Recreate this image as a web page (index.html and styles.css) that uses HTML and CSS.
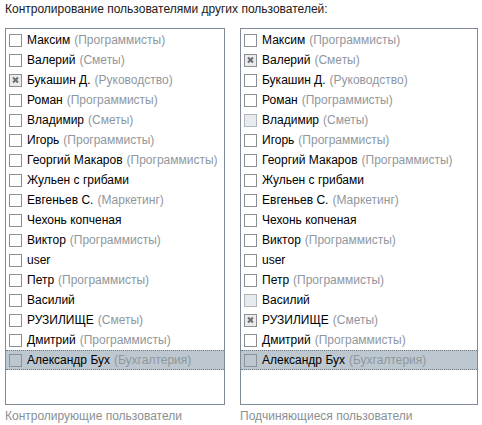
FILE: index.html
```html
<!DOCTYPE html>
<html>
<head>
<meta charset="utf-8">
<link rel="stylesheet" href="styles.css">
</head>
<body>
<div class="title">Контролирование пользователями других пользователей:</div>
<div class="panels">
  <div class="panel">
    <div class="list">
      <div class="row"><span class="cb"></span><span class="name">Максим</span><span class="grp">(Программисты)</span></div>
      <div class="row"><span class="cb"></span><span class="name">Валерий</span><span class="grp">(Сметы)</span></div>
      <div class="row"><span class="cb checked"></span><span class="name">Букашин Д.</span><span class="grp">(Руководство)</span></div>
      <div class="row"><span class="cb"></span><span class="name">Роман</span><span class="grp">(Программисты)</span></div>
      <div class="row"><span class="cb"></span><span class="name">Владимир</span><span class="grp">(Сметы)</span></div>
      <div class="row"><span class="cb"></span><span class="name">Игорь</span><span class="grp">(Программисты)</span></div>
      <div class="row"><span class="cb"></span><span class="name">Георгий Макаров</span><span class="grp">(Программисты)</span></div>
      <div class="row"><span class="cb"></span><span class="name">Жульен с грибами</span></div>
      <div class="row"><span class="cb"></span><span class="name">Евгеньев С.</span><span class="grp">(Маркетинг)</span></div>
      <div class="row"><span class="cb"></span><span class="name">Чехонь копченая</span></div>
      <div class="row"><span class="cb"></span><span class="name">Виктор</span><span class="grp">(Программисты)</span></div>
      <div class="row"><span class="cb"></span><span class="name">user</span></div>
      <div class="row"><span class="cb"></span><span class="name">Петр</span><span class="grp">(Программисты)</span></div>
      <div class="row"><span class="cb"></span><span class="name">Василий</span></div>
      <div class="row"><span class="cb"></span><span class="name">РУЗИЛИЩЕ</span><span class="grp">(Сметы)</span></div>
      <div class="row"><span class="cb"></span><span class="name">Дмитрий</span><span class="grp">(Программисты)</span></div>
      <div class="row selected"><span class="cb"></span><span class="name">Александр Бух</span><span class="grp">(Бухгалтерия)</span></div>
    </div>
    <div class="caption">Контролирующие пользователи</div>
  </div>
  <div class="panel">
    <div class="list">
      <div class="row"><span class="cb"></span><span class="name">Максим</span><span class="grp">(Программисты)</span></div>
      <div class="row"><span class="cb checked"></span><span class="name">Валерий</span><span class="grp">(Сметы)</span></div>
      <div class="row"><span class="cb"></span><span class="name">Букашин Д.</span><span class="grp">(Руководство)</span></div>
      <div class="row"><span class="cb"></span><span class="name">Роман</span><span class="grp">(Программисты)</span></div>
      <div class="row"><span class="cb disabled"></span><span class="name">Владимир</span><span class="grp">(Сметы)</span></div>
      <div class="row"><span class="cb"></span><span class="name">Игорь</span><span class="grp">(Программисты)</span></div>
      <div class="row"><span class="cb"></span><span class="name">Георгий Макаров</span><span class="grp">(Программисты)</span></div>
      <div class="row"><span class="cb"></span><span class="name">Жульен с грибами</span></div>
      <div class="row"><span class="cb"></span><span class="name">Евгеньев С.</span><span class="grp">(Маркетинг)</span></div>
      <div class="row"><span class="cb"></span><span class="name">Чехонь копченая</span></div>
      <div class="row"><span class="cb"></span><span class="name">Виктор</span><span class="grp">(Программисты)</span></div>
      <div class="row"><span class="cb"></span><span class="name">user</span></div>
      <div class="row"><span class="cb"></span><span class="name">Петр</span><span class="grp">(Программисты)</span></div>
      <div class="row"><span class="cb disabled"></span><span class="name">Василий</span></div>
      <div class="row"><span class="cb checked"></span><span class="name">РУЗИЛИЩЕ</span><span class="grp">(Сметы)</span></div>
      <div class="row"><span class="cb"></span><span class="name">Дмитрий</span><span class="grp">(Программисты)</span></div>
      <div class="row selected"><span class="cb"></span><span class="name">Александр Бух</span><span class="grp">(Бухгалтерия)</span></div>
    </div>
    <div class="caption">Подчиняющиеся пользователи</div>
  </div>
</div>
</body>
</html>
```
FILE: styles.css
```css
html, body {
  margin: 0;
  padding: 0;
  background: #ffffff;
}
body {
  font-family: "Liberation Sans", Arial, sans-serif;
  font-size: 12px;
  color: #000;
  padding: 1px 0 0 5px;
}
.title {
  height: 16px;
  line-height: 16px;
  color: #1a1a1a;
}
.panels {
  display: grid;
  grid-template-columns: 220px 238px;
  column-gap: 15px;
  margin-top: 11px;
}
.list {
  border: 1px solid #808b95;
  padding: 1px 0;
  box-sizing: border-box;
  height: 377px;
}
.row {
  height: 20px;
  display: flex;
  align-items: center;
  padding-left: 3px;
  box-sizing: border-box;
  white-space: nowrap;
}
.row.selected {
  background: #bcc7cf;
  border-top: 1px dotted #6f7a82;
  border-bottom: 1px dotted #6f7a82;
}
.cb {
  width: 13px;
  height: 13px;
  box-sizing: border-box;
  border: 1px solid #8c8f92;
  background: #fff;
  margin-right: 5px;
  flex: none;
  position: relative;
}
.cb.disabled {
  background: #e8ebee;
  border-color: #b2b6ba;
}
.row.selected .cb {
  background: transparent;
  border-color: #8c9298;
}
.cb.checked {
  background: #e9ebed;
}
.cb.checked::before,
.cb.checked::after {
  content: "";
  position: absolute;
  left: 2px;
  top: 4px;
  width: 7px;
  height: 2px;
  background: #6a6e73;
}
.cb.checked::before { transform: rotate(45deg); }
.cb.checked::after { transform: rotate(-45deg); }
.name {
  color: #000;
}
.grp {
  color: #8f979e;
  margin-left: 4px;
}
.caption {
  color: #8a8f94;
  margin-top: 3px;
  height: 16px;
  line-height: 16px;
}
```
